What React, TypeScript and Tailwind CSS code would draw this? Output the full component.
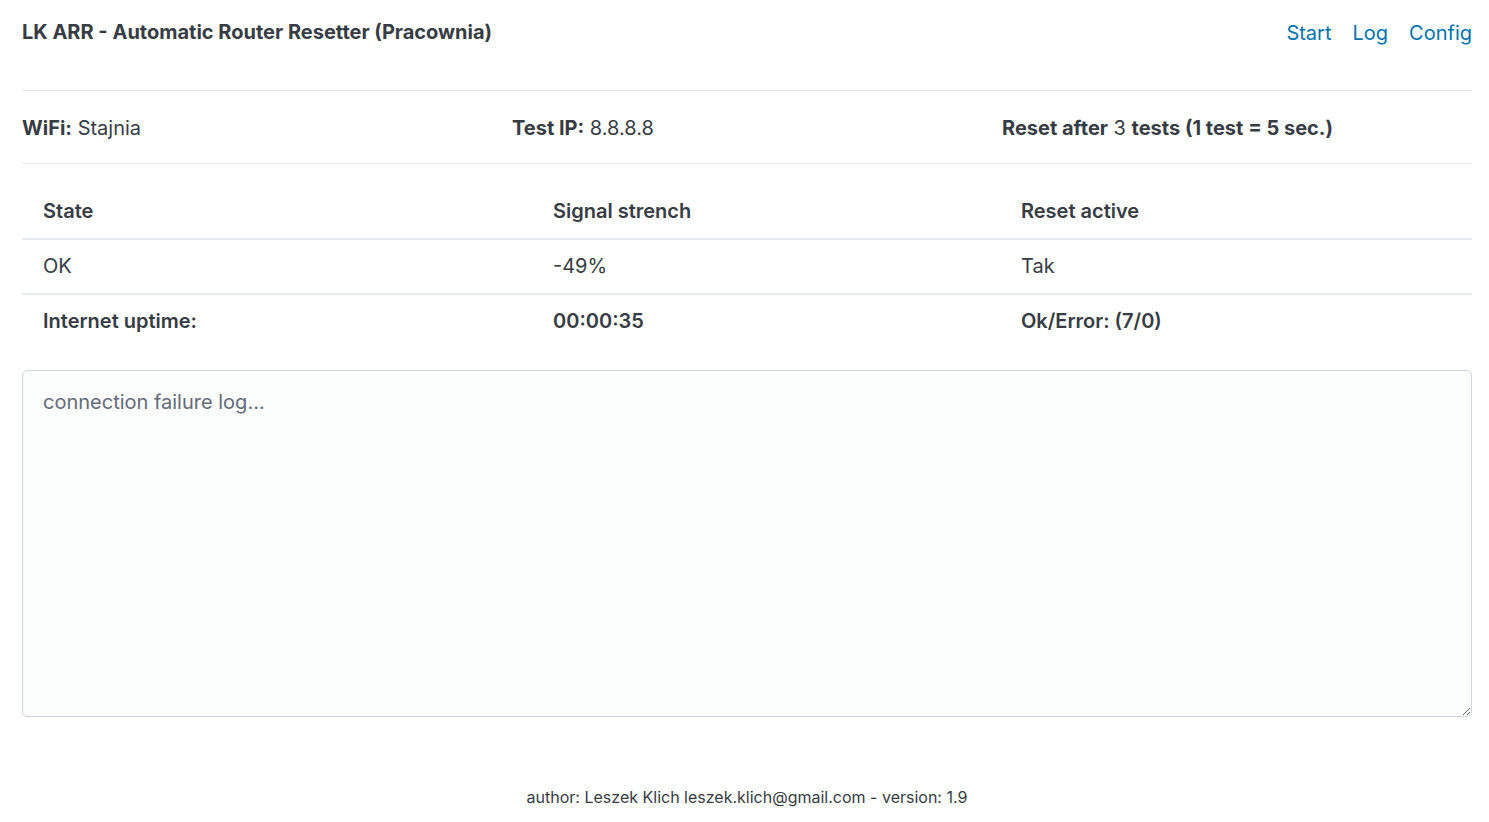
const rows = [
  { state: "OK", signal: "-49%", reset: "Tak" },
];

const App = () => {
  return (
    <div className="min-h-[822px] bg-white pl-[22px] pr-[17px] text-[20px] leading-[30px] text-[#373c44] font-['Inter','Liberation_Sans',sans-serif]">
      {/* header */}
      <nav className="flex justify-between items-start pt-[17px] h-[90px]">
        <strong className="font-bold">LK ARR - Automatic Router Resetter (Pracownia)</strong>
        <ul className="flex gap-[21px] text-[#0172ad] pt-[1px]">
          <li><a href="#">Start</a></li>
          <li><a href="#">Log</a></li>
          <li><a href="#">Config</a></li>
        </ul>
      </nav>

      {/* settings */}
      <div className="border-t border-b border-[#e7eaf0] grid grid-cols-3 gap-5 pt-[22px] pb-[20px]">
        <div><strong className="font-bold">WiFi:</strong> Stajnia</div>
        <div><strong className="font-bold">Test IP:</strong> 8.8.8.8</div>
        <div>
          <strong className="font-bold">Reset after</strong> 3{" "}
          <strong className="font-bold">tests (1 test = 5 sec.)</strong>
        </div>
      </div>

      {/* status */}
      <table className="w-full mt-[20px] border-separate border-spacing-0 text-left">
        <thead>
          <tr>
            <th className="w-[510px] px-[21px] py-[12px] font-semibold border-b-2 border-[#e7eaf0]">State</th>
            <th className="w-[468px] px-[21px] py-[12px] font-semibold border-b-2 border-[#e7eaf0]">Signal strench</th>
            <th className="px-[21px] py-[12px] font-semibold border-b-2 border-[#e7eaf0]">Reset active</th>
          </tr>
        </thead>
        <tbody>
          {rows.map((r) => (
            <tr key={r.state}>
              <td className="px-[21px] pt-[11px] pb-[12px] border-b-2 border-[#e7eaf0]">{r.state}</td>
              <td className="px-[21px] pt-[11px] pb-[12px] border-b-2 border-[#e7eaf0]">{r.signal}</td>
              <td className="px-[21px] pt-[11px] pb-[12px] border-b-2 border-[#e7eaf0]">{r.reset}</td>
            </tr>
          ))}
        </tbody>
        <tfoot>
          <tr className="font-semibold">
            <td className="px-[21px] pt-[11px] pb-[12px]">Internet uptime:</td>
            <td className="px-[21px] pt-[11px] pb-[12px]">00:00:35</td>
            <td className="px-[21px] pt-[11px] pb-[12px]">Ok/Error: (7/0)</td>
          </tr>
        </tfoot>
      </table>

      <textarea
        className="block w-full h-[347px] mt-[22px] px-[20px] py-[16px] bg-[#fbfcfc] border border-[#cfd5e2] rounded-[5px] outline-none placeholder:text-[#646b79]"
        placeholder="connection failure log..."
      />

      <footer className="text-center text-[16px] leading-[24px] pt-[68px]">
        author: Leszek Klich leszek.klich@gmail.com - version: 1.9
      </footer>
    </div>
  );
};

export default App;
